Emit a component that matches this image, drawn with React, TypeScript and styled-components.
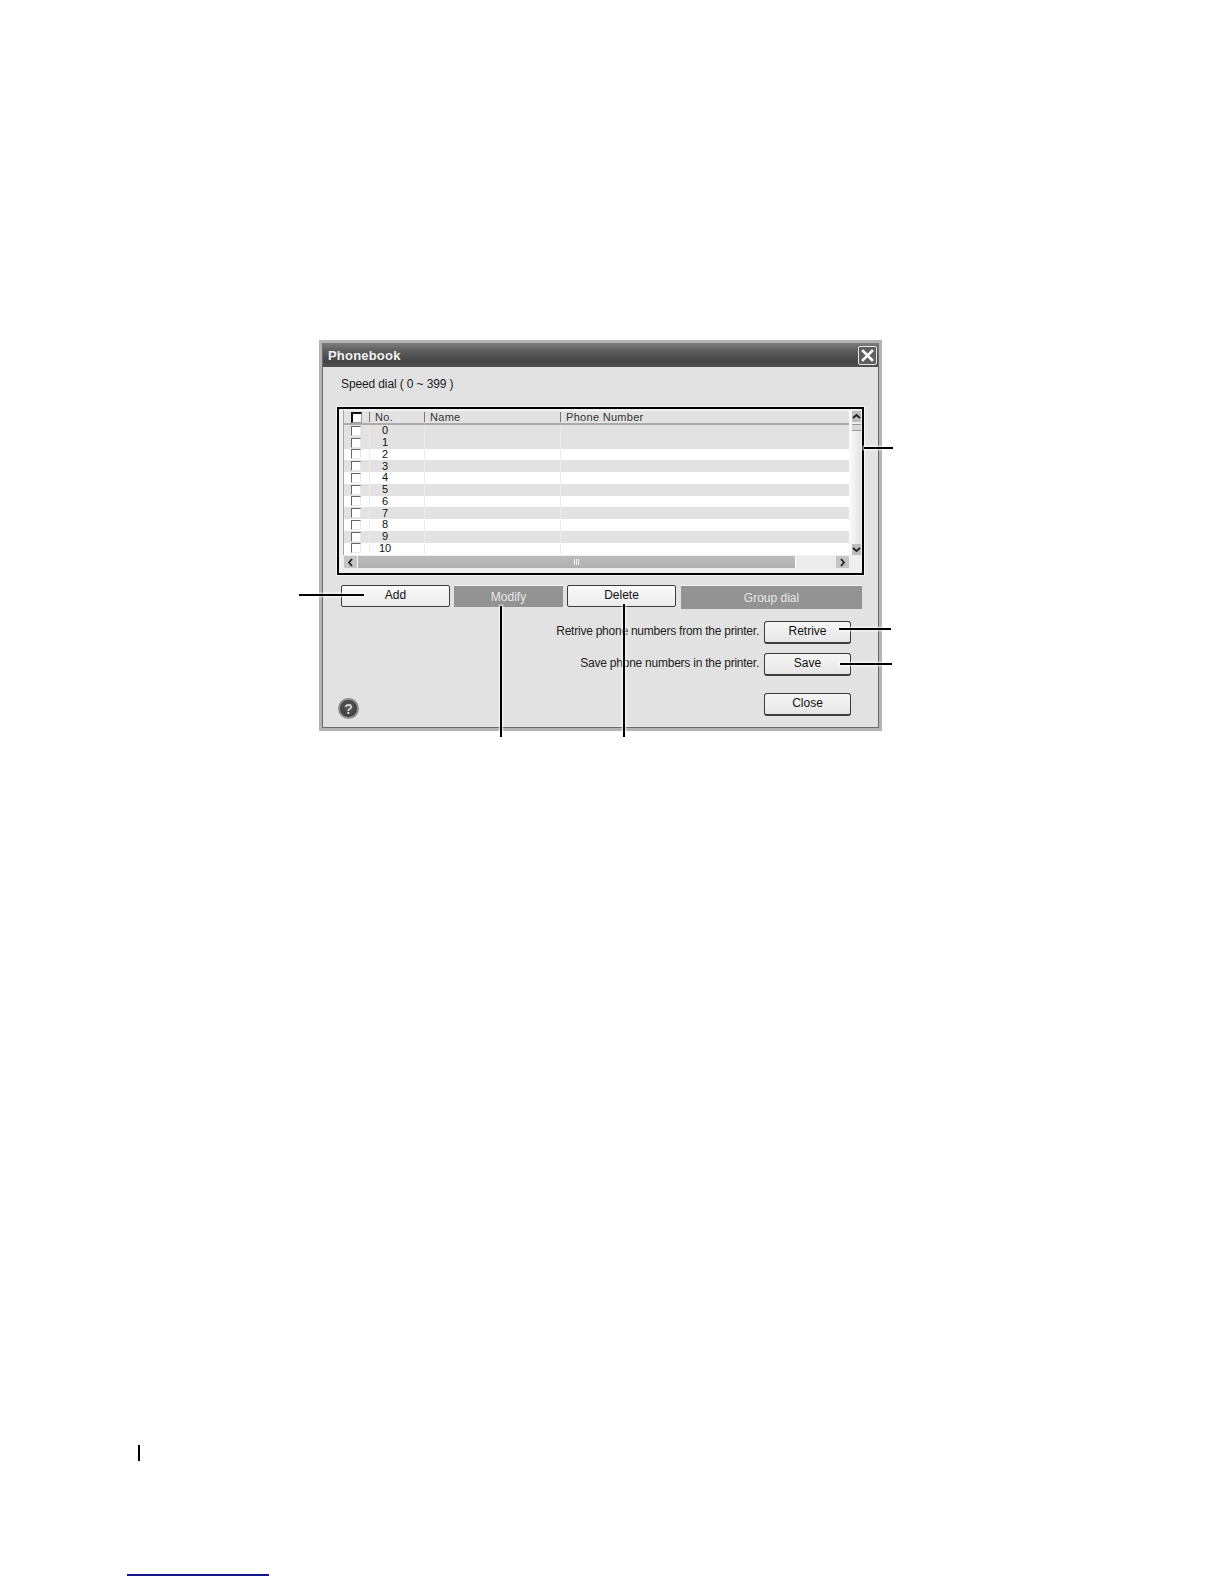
import React from 'react'
import styled, { createGlobalStyle } from 'styled-components'

const GlobalStyle = createGlobalStyle`
  html, body {
    margin: 0;
    padding: 0;
    background: #fff;
  }
  body {
    font-family: "Liberation Sans", Arial, sans-serif;
    font-size: 12px;
    color: #1c1c1c;
  }
`

const numbers = [0, 1, 2, 3, 4, 5, 6, 7, 8, 9, 10]

export default function App() {
  return (
    <Page>
      <GlobalStyle />
      <DialogWrap>
        <Dialog>
          <TitleBar>
            <Title>Phonebook</Title>
            <CloseBox aria-label="Close">
              <svg width="13" height="13" viewBox="0 0 13 13">
                <path d="M2 2 L11 11 M11 2 L2 11" stroke="#fff" strokeWidth="2.6" strokeLinecap="square" />
              </svg>
            </CloseBox>
          </TitleBar>
          <Body>
            <RangeLabel>Speed dial ( 0 ~ 399 )</RangeLabel>
            <Frame>
              <ListBox>
                <ListMain>
                  <Rows>
                    <HeaderRow>
                      <CheckCell>
                        <HeaderCheck />
                      </CheckCell>
                      <HeaderCell>No.</HeaderCell>
                      <HeaderCell>Name</HeaderCell>
                      <HeaderCell>Phone Number</HeaderCell>
                    </HeaderRow>
                    {numbers.map((n) => (
                      <Row key={n} $striped={n < 2 || n % 2 === 1}>
                        <CheckCell>
                          <RowCheck />
                        </CheckCell>
                        <NumberCell>{n}</NumberCell>
                        <BlankCell />
                        <BlankCell />
                      </Row>
                    ))}
                  </Rows>
                  <VScroll>
                    <ScrollButton>
                      <svg width="9" height="7" viewBox="0 0 9 7">
                        <path d="M1 5 L4.5 2 L8 5" fill="none" stroke="#222" strokeWidth="1.8" />
                      </svg>
                    </ScrollButton>
                    <VThumb />
                    <VSpacer />
                    <ScrollButton>
                      <svg width="9" height="7" viewBox="0 0 9 7">
                        <path d="M1 2 L4.5 5 L8 2" fill="none" stroke="#222" strokeWidth="1.8" />
                      </svg>
                    </ScrollButton>
                  </VScroll>
                </ListMain>
                <HScroll>
                  <HButton>
                    <svg width="7" height="9" viewBox="0 0 7 9">
                      <path d="M5 1 L2 4.5 L5 8" fill="none" stroke="#222" strokeWidth="1.8" />
                    </svg>
                  </HButton>
                  <HThumb>
                    <Grip>
                      <i />
                      <i />
                      <i />
                    </Grip>
                  </HThumb>
                  <HTrack />
                  <HButton>
                    <svg width="7" height="9" viewBox="0 0 7 9">
                      <path d="M2 1 L5 4.5 L2 8" fill="none" stroke="#222" strokeWidth="1.8" />
                    </svg>
                  </HButton>
                </HScroll>
              </ListBox>
            </Frame>
            <ActionRow>
              <PlainButton>Add</PlainButton>
              <DisabledButton>Modify</DisabledButton>
              <PlainButton>Delete</PlainButton>
              <GroupButton>Group dial</GroupButton>
            </ActionRow>
            <PrinterRow>
              <PrinterLabel>Retrive phone numbers from the printer.</PrinterLabel>
              <SideButton>Retrive</SideButton>
            </PrinterRow>
            <PrinterRow $gap={9}>
              <PrinterLabel>Save phone numbers in the printer.</PrinterLabel>
              <SideButton>Save</SideButton>
            </PrinterRow>
            <Footer>
              <HelpIcon>?</HelpIcon>
              <SideButton>Close</SideButton>
            </Footer>
          </Body>
        </Dialog>
        <Callout $x={545} $y={107} $w={29} $h={2} />
        <Callout $x={-20} $y={254} $w={65} $h={2} />
        <Callout $x={181} $y={266} $w={2} $h={131} />
        <Callout $x={304} $y={264} $w={2} $h={133} />
        <Callout $x={520} $y={288} $w={52} $h={2} />
        <Callout $x={521} $y={323} $w={52} $h={2} />
      </DialogWrap>
      <PageMark />
      <FooterLink />
    </Page>
  )
}

const Page = styled.div`
  height: 1584px;
  box-sizing: border-box;
  padding: 340px 0 0 319px;
  display: flex;
  flex-direction: column;
  overflow: hidden;
`

const DialogWrap = styled.div`
  position: relative;
  flex: none;
  width: 563px;
  height: 391px;
`

const Dialog = styled.div`
  box-sizing: border-box;
  width: 100%;
  height: 100%;
  border: 3px solid #b4b4b4;
  display: flex;
  flex-direction: column;
  background: #e2e2e2;
  box-shadow: inset 0 0 0 1px #6a6a6a;
`

const TitleBar = styled.div`
  flex: none;
  height: 24px;
  margin: 0 1px;
  padding: 0 1px 0 5px;
  display: flex;
  align-items: center;
  justify-content: space-between;
  background: linear-gradient(#7c7c7c 0%, #5c5c5c 35%, #454545 75%, #505050 100%);
`

const Title = styled.span`
  font-size: 13px;
  font-weight: 700;
  letter-spacing: 0.2px;
  color: #f2f2f2;
`

const CloseBox = styled.div`
  box-sizing: border-box;
  width: 19px;
  height: 19px;
  border: 1px solid #e6e6e6;
  border-radius: 2px;
  display: flex;
  align-items: center;
  justify-content: center;
  background: #5f5f5f;
`

const Body = styled.div`
  flex: 1;
  display: flex;
  flex-direction: column;
  padding-left: 1px;
`

const RangeLabel = styled.div`
  margin: 10px 0 0 18px;
  line-height: 14px;
  letter-spacing: -0.12px;
`

const Frame = styled.div`
  box-sizing: border-box;
  flex: none;
  width: 527px;
  height: 168px;
  margin: 16px 0 0 14px;
  padding: 1px 1px 5px 4px;
  border: 2px solid #000;
  outline: 1px solid #f4f4f4;
  background: #efefef;
`

const ListBox = styled.div`
  display: flex;
  flex-direction: column;
  height: 100%;
`

const ListMain = styled.div`
  flex: none;
  display: flex;
  height: 145px;
`

const Rows = styled.div`
  flex: none;
  width: 506px;
  display: flex;
  flex-direction: column;
  background: #fff;
  border-left: 1px solid #a8a8a8;
  box-sizing: border-box;
`

const columns = `25px 55px 136px 1fr`

const HeaderRow = styled.div`
  flex: none;
  height: 15px;
  box-sizing: border-box;
  display: grid;
  grid-template-columns: ${columns};
  background: #e2e2e2;
  border-top: 1px solid #f4f4f4;
  border-bottom: 2px solid #ababab;
`

const Row = styled.div<{ $striped: boolean }>`
  flex: none;
  height: 11.75px;
  display: grid;
  grid-template-columns: ${columns};
  background: ${(p) => (p.$striped ? '#e2e2e2' : '#fff')};
`

const CheckCell = styled.div`
  display: flex;
  align-items: center;
  padding-left: 7px;
`

const HeaderCell = styled.div`
  display: flex;
  align-items: center;
  padding-left: 6px;
  font-size: 11px;
  letter-spacing: 0.3px;
  color: #333;
  line-height: 12px;
  position: relative;
  &::before {
    content: '';
    position: absolute;
    left: 0;
    top: 1px;
    bottom: 1px;
    width: 1px;
    background: #777;
  }
`

const HeaderCheck = styled.div`
  box-sizing: border-box;
  width: 11px;
  height: 11px;
  background: #fff;
  border: 1px solid #999;
  border-top: 2px solid #111;
  border-left: 2px solid #111;
`

const RowCheck = styled.div`
  box-sizing: border-box;
  width: 10px;
  height: 10px;
  background: #fff;
  border: 1px solid #e8e8e8;
  border-top: 1px solid #666;
  border-left: 1px solid #666;
`

const NumberCell = styled.div`
  display: flex;
  align-items: center;
  justify-content: center;
  padding-right: 24px;
  font-size: 11px;
  line-height: 11px;
  color: #111;
  border-left: 1px solid #ececec;
`

const BlankCell = styled.div`
  border-left: 1px solid #ececec;
`

const VScroll = styled.div`
  flex: none;
  width: 12px;
  box-sizing: border-box;
  padding: 1px 0 0 3px;
  display: flex;
  flex-direction: column;
  background: linear-gradient(90deg, #fbfbfb, #e4e4e4);
`

const ScrollButton = styled.div`
  flex: none;
  height: 11px;
  display: flex;
  align-items: center;
  justify-content: center;
  background: #bdbdbd;
`

const VThumb = styled.div`
  flex: none;
  height: 7px;
  margin-top: 2px;
  box-sizing: border-box;
  background: #d8d8d8;
  border-top: 1px solid #999;
  border-bottom: 1px solid #999;
`

const VSpacer = styled.div`
  flex: 1;
`

const HScroll = styled.div`
  flex: none;
  height: 12px;
  margin: 1px 11px 0 1px;
  display: flex;
  background: #e6e6e6;
`

const HButton = styled.div`
  flex: none;
  width: 14px;
  display: flex;
  align-items: center;
  justify-content: center;
  background: #c4c4c4;
  border-right: 1px solid #f4f4f4;
  box-sizing: border-box;
`

const HThumb = styled.div`
  flex: none;
  width: 438px;
  display: flex;
  align-items: center;
  justify-content: center;
  background: linear-gradient(#bcbcbc, #b0b0b0);
  border-right: 1px solid #fff;
  box-sizing: border-box;
`

const Grip = styled.div`
  display: flex;
  gap: 1px;
  i {
    width: 1px;
    height: 6px;
    background: #f2f2f2;
  }
`

const HTrack = styled.div`
  flex: 1;
  background: #ececec;
`

const ActionRow = styled.div`
  flex: none;
  display: flex;
  align-items: flex-start;
  gap: 4px;
  margin: 10px 0 0 18px;
`

const PlainButton = styled.button`
  box-sizing: border-box;
  flex: none;
  width: 109px;
  height: 22px;
  padding: 0 0 3px;
  border: 1px solid #3c3c3c;
  border-radius: 2px;
  background: linear-gradient(#fafafa, #ececec);
  font: 12px "Liberation Sans", Arial, sans-serif;
  color: #111;
`

const DisabledButton = styled.button`
  box-sizing: border-box;
  flex: none;
  width: 109px;
  height: 22px;
  padding: 0;
  border: 0;
  border-top: 1px solid #f2f2f2;
  background: #939393;
  font: 12px "Liberation Sans", Arial, sans-serif;
  color: #e8e8e8;
`

const GroupButton = styled(DisabledButton)`
  width: 181px;
  height: 24px;
  margin-left: 1px;
`

const PrinterRow = styled.div<{ $gap?: number }>`
  flex: none;
  display: flex;
  justify-content: flex-end;
  align-items: center;
  gap: 5px;
  padding-right: 28px;
  margin-top: ${(p) => p.$gap ?? 12}px;
`

const PrinterLabel = styled.span`
  padding-bottom: 4px;
  font-size: 12px;
  letter-spacing: -0.24px;
  color: #222;
`

const SideButton = styled.button`
  box-sizing: border-box;
  flex: none;
  width: 87px;
  height: 23px;
  padding: 0 0 2px;
  border: 1px solid #3c3c3c;
  border-bottom-width: 2px;
  border-radius: 3px;
  background: linear-gradient(#f6f6f6, #e6e6e6);
  font: 12px "Liberation Sans", Arial, sans-serif;
  color: #111;
`

const Footer = styled.div`
  flex: none;
  display: flex;
  justify-content: space-between;
  align-items: flex-start;
  margin: 17px 0 0 15px;
  padding-right: 28px;
`

const HelpIcon = styled.div`
  box-sizing: border-box;
  width: 21px;
  height: 21px;
  margin-top: 5px;
  border-radius: 50%;
  border: 2px solid #8c8c8c;
  display: flex;
  align-items: center;
  justify-content: center;
  background: radial-gradient(circle at 50% 40%, #5a5a5a, #333);
  font-size: 14px;
  font-weight: 700;
  color: #d4d4d4;
`

const Callout = styled.div<{ $x: number; $y: number; $w: number; $h: number }>`
  position: absolute;
  left: ${(p) => p.$x}px;
  top: ${(p) => p.$y}px;
  width: ${(p) => p.$w}px;
  height: ${(p) => p.$h}px;
  background: #000;
  box-shadow: 0 0 0 1.5px rgba(255, 255, 255, 0.55);
`

const PageMark = styled.div`
  flex: none;
  width: 2px;
  height: 16px;
  margin: 714px 0 0 -181px;
  background: #000;
`

const FooterLink = styled.div`
  flex: none;
  width: 142px;
  height: 2px;
  margin: 113px 0 0 -192px;
  background: #14148c;
`
